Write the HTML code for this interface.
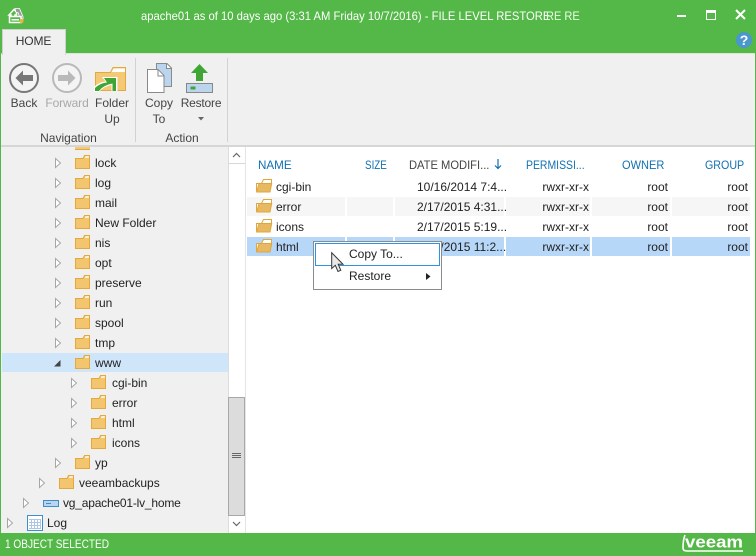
<!DOCTYPE html>
<html><head><meta charset="utf-8"><style>
html,body{margin:0;padding:0}
body{width:756px;height:556px;position:relative;overflow:hidden;background:#54b848;font-family:"Liberation Sans",sans-serif;font-size:12px;color:#222}
div,span{position:absolute;white-space:nowrap}
svg{position:absolute;overflow:visible}
.t{line-height:16px;height:16px}
.rb{color:#444;text-align:center;line-height:16px}
.h{color:#1070b0;top:157px;line-height:16px;transform-origin:0 0}
.c{text-align:right;line-height:16px;width:100px}
.sep{background:#d2d2d2;width:1px}
.cell{height:19px}
</style></head><body>
<svg width="0" height="0" style="position:absolute"><defs>
<g id="f"><path d="M.5 3.500H8L9.500.5H14.500V13.500H.5z" fill="#f2c56e" stroke="#e3a93c"/><path d="M9.800 2.800L10.600 1.300H13.800V2.800z" fill="#fff"/></g>
<g id="a"><path d="M.5.5L5.500 5 .5 9.500z" fill="#fff" stroke="#a6a6a6"/></g>
<g id="o"><path d="M.5 12.500V4.500H5.500L7.500.5H15.500V5" fill="#fff" stroke="#e0a63a"/><path d="M.7 13L3 4.500H15.700L14 13z" fill="#e8b963" stroke="#e0a63a"/></g>
</defs></svg>

<!-- title bar -->
<svg style="left:8px;top:7px" width="18" height="18"><path d="M1 8L6 2.500 8.500 5V8H7V11H3V8z" fill="none" stroke="#fff" stroke-width="1.500"/><path d="M7 1.500H11.500L15 9.500V12H12.500L10 5.500H8z" fill="#9a9a9a" stroke="#fff" stroke-width=".8"/><rect x="1.500" y="9.500" width="11.500" height="6" fill="#54b848" stroke="#fff" stroke-width="1.500"/><rect x="3.500" y="12" width="7.500" height="1.500" fill="#fff"/><circle cx="13.500" cy="14" r="2" fill="#f0b040"/></svg>
<div style="left:141px;top:8px;color:#fff;line-height:16px;transform:scaleX(.937);transform-origin:0 0">apache01 as of 10 days ago (3:31 AM Friday 10/7/2016) - FILE LEVEL RESTORE</div>
<div style="left:546px;top:8px;color:#e8ffe0;line-height:16px;transform:scaleX(.92);transform-origin:0 0">RE RE</div>
<div style="left:677px;top:15px;width:9px;height:2px;background:#fff"></div>
<div style="left:706px;top:10px;width:8px;height:6px;border:1.500px solid #fff;border-top-width:3px"></div>
<svg style="left:735px;top:9px" width="12" height="12"><path d="M1 1L10 10M10 1L1 10" stroke="#fff" stroke-width="2"/></svg>
<div style="left:736px;top:32px;width:16px;height:16px;border-radius:50%;background:#4a97cf;color:#fff;font-weight:bold;font-size:14px;text-align:center;line-height:16px">?</div>

<!-- ribbon -->
<div style="left:1px;top:53px;width:754px;height:93px;background:#f0f0f0"></div>
<div style="left:2px;top:29px;width:62px;height:25px;background:#f0f0f0;border:1px solid #d0d0d0;border-bottom:0"></div>
<div style="left:2px;top:33px;width:63px;text-align:center;color:#333;line-height:16px;letter-spacing:-.1px">HOME</div>
<div style="left:0;top:53px;width:2px;height:1px;background:#d0d0d0"></div>
<div style="left:65px;top:53px;width:691px;height:1px;background:#d8e8d4"></div>

<svg style="left:9px;top:63px" width="30" height="30"><circle cx="15" cy="15" r="14" fill="#f4f4f4" stroke="#777" stroke-width="2"/><path d="M6.500 15L14 7.500V12H24V18H14V22.500z" fill="#777"/></svg>
<svg style="left:52px;top:63px" width="30" height="30"><circle cx="15" cy="15" r="14" fill="#f4f4f4" stroke="#b9b9b9" stroke-width="2"/><path d="M23.500 15L16 7.500V12H6V18H16V22.500z" fill="#b9b9b9"/></svg>
<svg style="left:95px;top:67px" width="32" height="25"><path d="M.5 5.500H15.500L18 .5H30.500V23.500H.5z" fill="#f3c976" stroke="#e3a93c"/><path d="M16.500 5L18.500 1.500H30V5z" fill="#fff"/><path d="M-1 20C2 17 6 15 10.500 14.500L7 10H22.500V24H16.500V18C12 19 7 21 4 25H-1z" fill="#fff"/><path d="M0 21C3 18 7 16 12 15.500L9 11H21V24H17.500V16.500C12 17.500 7 20 4 24H0z" fill="#3fa535"/></svg>
<div class="rb" style="left:4px;width:40px;top:95px">Back</div>
<div class="rb" style="left:42px;width:50px;top:95px;color:#a8a8a8;letter-spacing:-.1px">Forward</div>
<div class="rb" style="left:92px;width:40px;top:95px">Folder</div>
<div class="rb" style="left:92px;width:40px;top:111px">Up</div>
<div class="sep" style="left:135px;top:58px;height:84px"></div>
<svg style="left:146px;top:62px" width="28" height="32"><path d="M10.500 1.500H21L25.500 6V24.500H10.500z" fill="#bcd5ee" stroke="#8a8a8a"/><path d="M20.500 2V6.500H25" fill="#fff" stroke="#8a8a8a"/><path d="M1.500 7.500H12L18 13.500V30.500H1.500z" fill="#fff" stroke="#8a8a8a"/><path d="M12 8V14H17.500" fill="#fff" stroke="#8a8a8a"/></svg>
<svg style="left:186px;top:64px" width="28" height="30"><path d="M13.500 0L22 9H17V17H10V9H5z" fill="#3fa535"/><rect x=".5" y="19.500" width="26" height="9" fill="#bcd5ee" stroke="#888"/><rect x="4.500" y="22.500" width="5" height="3" fill="#3fa535"/></svg>
<div class="rb" style="left:139px;width:40px;top:95px">Copy</div>
<div class="rb" style="left:139px;width:40px;top:111px">To</div>
<div class="rb" style="left:178px;width:46px;top:95px;letter-spacing:-.2px">Restore</div>
<svg style="left:198px;top:117px" width="6" height="4"><path d="M0 0H6L3 3.500z" fill="#666"/></svg>
<div class="rb" style="left:2px;width:133px;top:130px">Navigation</div>
<div class="rb" style="left:136px;width:92px;top:130px">Action</div>
<div class="sep" style="left:227px;top:58px;height:84px"></div>
<div style="left:1px;top:145px;width:754px;height:2px;background:#d6d6d6"></div>

<!-- tree -->
<div style="left:1px;top:147px;width:227px;height:386px;background:#f0f0f0"></div>
<div style="left:2px;top:353px;width:226px;height:19px;background:#cfe5fa"></div>
<div style="left:75px;top:147px;width:15px;height:2px;background:#f3c976;border-bottom:1px solid #e3a93c"></div>

<svg style="left:55px;top:158px" width="6" height="10"><use href="#a"/></svg><svg style="left:75px;top:155px" width="15" height="15"><use href="#f"/></svg><div class="t" style="left:95px;top:155px">lock</div>
<svg style="left:55px;top:178px" width="6" height="10"><use href="#a"/></svg><svg style="left:75px;top:175px" width="15" height="15"><use href="#f"/></svg><div class="t" style="left:95px;top:175px">log</div>
<svg style="left:55px;top:198px" width="6" height="10"><use href="#a"/></svg><svg style="left:75px;top:195px" width="15" height="15"><use href="#f"/></svg><div class="t" style="left:95px;top:195px">mail</div>
<svg style="left:55px;top:218px" width="6" height="10"><use href="#a"/></svg><svg style="left:75px;top:215px" width="15" height="15"><use href="#f"/></svg><div class="t" style="left:95px;top:215px">New Folder</div>
<svg style="left:55px;top:238px" width="6" height="10"><use href="#a"/></svg><svg style="left:75px;top:235px" width="15" height="15"><use href="#f"/></svg><div class="t" style="left:95px;top:235px">nis</div>
<svg style="left:55px;top:258px" width="6" height="10"><use href="#a"/></svg><svg style="left:75px;top:255px" width="15" height="15"><use href="#f"/></svg><div class="t" style="left:95px;top:255px">opt</div>
<svg style="left:55px;top:278px" width="6" height="10"><use href="#a"/></svg><svg style="left:75px;top:275px" width="15" height="15"><use href="#f"/></svg><div class="t" style="left:95px;top:275px">preserve</div>
<svg style="left:55px;top:298px" width="6" height="10"><use href="#a"/></svg><svg style="left:75px;top:295px" width="15" height="15"><use href="#f"/></svg><div class="t" style="left:95px;top:295px">run</div>
<svg style="left:55px;top:318px" width="6" height="10"><use href="#a"/></svg><svg style="left:75px;top:315px" width="15" height="15"><use href="#f"/></svg><div class="t" style="left:95px;top:315px">spool</div>
<svg style="left:55px;top:338px" width="6" height="10"><use href="#a"/></svg><svg style="left:75px;top:335px" width="15" height="15"><use href="#f"/></svg><div class="t" style="left:95px;top:335px">tmp</div>
<svg style="left:54px;top:360px" width="7" height="7"><path d="M6.500 0V6.500H0z" fill="#444"/></svg><svg style="left:75px;top:355px" width="15" height="15"><use href="#f"/></svg><div class="t" style="left:95px;top:355px">www</div>
<svg style="left:71px;top:378px" width="6" height="10"><use href="#a"/></svg><svg style="left:91px;top:375px" width="15" height="15"><use href="#f"/></svg><div class="t" style="left:112px;top:375px">cgi-bin</div>
<svg style="left:71px;top:398px" width="6" height="10"><use href="#a"/></svg><svg style="left:91px;top:395px" width="15" height="15"><use href="#f"/></svg><div class="t" style="left:112px;top:395px">error</div>
<svg style="left:71px;top:418px" width="6" height="10"><use href="#a"/></svg><svg style="left:91px;top:415px" width="15" height="15"><use href="#f"/></svg><div class="t" style="left:112px;top:415px">html</div>
<svg style="left:71px;top:438px" width="6" height="10"><use href="#a"/></svg><svg style="left:91px;top:435px" width="15" height="15"><use href="#f"/></svg><div class="t" style="left:112px;top:435px">icons</div>
<svg style="left:55px;top:458px" width="6" height="10"><use href="#a"/></svg><svg style="left:75px;top:455px" width="15" height="15"><use href="#f"/></svg><div class="t" style="left:95px;top:455px">yp</div>
<svg style="left:39px;top:478px" width="6" height="10"><use href="#a"/></svg><svg style="left:59px;top:475px" width="15" height="15"><use href="#f"/></svg><div class="t" style="left:79px;top:475px">veeambackups</div>
<svg style="left:23px;top:498px" width="6" height="10"><use href="#a"/></svg>
<svg style="left:43px;top:500px" width="16" height="7"><rect x=".5" y=".5" width="15" height="6" fill="#bcd5ee" stroke="#3d8ec9"/><rect x="3" y="3" width="5" height="1" fill="#3d8ec9"/></svg>
<div class="t" style="left:63px;top:495px;letter-spacing:-.2px">vg_apache01-lv_home</div>
<svg style="left:7px;top:518px" width="6" height="10"><use href="#a"/></svg>
<svg style="left:27px;top:515px" width="16" height="16"><rect x=".5" y=".5" width="15" height="15" fill="#fff" stroke="#3d8ec9"/><path d="M2 4.500H14M2 7.500H14M2 10.500H14M2 13.500H14M4.500 4V14M7.500 4V14M10.500 4V14M13.500 4V14" stroke="#a9c8e6" stroke-width="1"/></svg>
<div class="t" style="left:47px;top:515px">Log</div>

<!-- scrollbar -->
<div style="left:228px;top:147px;width:17px;height:386px;background:#fff"></div>
<div style="left:228px;top:147px;width:1px;height:386px;background:#dcdcdc"></div>
<div style="left:245px;top:147px;width:1px;height:386px;background:#e4e4e4"></div>
<svg style="left:232px;top:152px" width="9" height="6"><path d="M1 5L4.500 1.500 8 5" fill="none" stroke="#666" stroke-width="1.200"/></svg>
<div style="left:228px;top:163px;width:17px;height:1px;background:#d8d8d8"></div>
<div style="left:228px;top:397px;width:15px;height:117px;background:#dcdcdc;border:1px solid #a8a8a8"></div>
<div style="left:232px;top:453px;width:9px;height:1px;background:#666"></div>
<div style="left:232px;top:455px;width:9px;height:1px;background:#666"></div>
<div style="left:232px;top:457px;width:9px;height:1px;background:#666"></div>
<svg style="left:232px;top:521px" width="9" height="6"><path d="M1 1L4.500 4.500 8 1" fill="none" stroke="#666" stroke-width="1.200"/></svg>

<!-- list -->
<div style="left:246px;top:147px;width:509px;height:386px;background:#fff"></div>
<div class="h" style="left:258px;transform:scaleX(.97)">NAME</div>
<div class="h" style="left:365px;transform:scaleX(.82)">SIZE</div>
<div class="h" style="left:409px;color:#444;transform:scaleX(.93)">DATE MODIFI...</div>
<svg style="left:494px;top:159px" width="8" height="11"><path d="M4 0V9M1 6.500L4 9.500 7 6.500" fill="none" stroke="#1070b0" stroke-width="1.200"/></svg>
<div class="h" style="left:526px;transform:scaleX(.87)">PERMISSI...</div>
<div class="h" style="left:622px;transform:scaleX(.92)">OWNER</div>
<div class="h" style="left:705px;transform:scaleX(.89)">GROUP</div>

<div class="cell" style="left:247px;top:197px;width:98px;background:#f6f6f6"></div>
<div class="cell" style="left:347px;top:197px;width:46px;background:#f6f6f6"></div>
<div class="cell" style="left:395px;top:197px;width:109px;background:#f6f6f6"></div>
<div class="cell" style="left:506px;top:197px;width:84px;background:#f6f6f6"></div>
<div class="cell" style="left:592px;top:197px;width:78px;background:#f6f6f6"></div>
<div class="cell" style="left:672px;top:197px;width:78px;background:#f6f6f6"></div>
<div class="cell" style="left:247px;top:237px;width:98px;background:#b7d7f8"></div>
<div class="cell" style="left:347px;top:237px;width:46px;background:#b7d7f8"></div>
<div class="cell" style="left:395px;top:237px;width:109px;background:#b7d7f8"></div>
<div class="cell" style="left:506px;top:237px;width:84px;background:#b7d7f8"></div>
<div class="cell" style="left:592px;top:237px;width:78px;background:#b7d7f8"></div>
<div class="cell" style="left:672px;top:237px;width:78px;background:#b7d7f8"></div>

<svg style="left:256px;top:179px" width="17" height="15"><use href="#o"/></svg><div class="t" style="left:276px;top:179px">cgi-bin</div>
<div class="t" style="left:417px;top:179px">10/16/2014 7:4...</div><div class="c t" style="left:489px;top:179px">rwxr-xr-x</div><div class="c t" style="left:568px;top:179px">root</div><div class="c t" style="left:648px;top:179px">root</div>
<svg style="left:256px;top:199px" width="17" height="15"><use href="#o"/></svg><div class="t" style="left:276px;top:199px">error</div>
<div class="t" style="left:417px;top:199px">2/17/2015 4:31...</div><div class="c t" style="left:489px;top:199px">rwxr-xr-x</div><div class="c t" style="left:568px;top:199px">root</div><div class="c t" style="left:648px;top:199px">root</div>
<svg style="left:256px;top:219px" width="17" height="15"><use href="#o"/></svg><div class="t" style="left:276px;top:219px">icons</div>
<div class="t" style="left:417px;top:219px">2/17/2015 5:19...</div><div class="c t" style="left:489px;top:219px">rwxr-xr-x</div><div class="c t" style="left:568px;top:219px">root</div><div class="c t" style="left:648px;top:219px">root</div>
<svg style="left:256px;top:239px" width="17" height="15"><use href="#o"/></svg><div class="t" style="left:276px;top:239px">html</div>
<div class="t" style="left:417px;top:239px">2/17/2015 11:2...</div><div class="c t" style="left:489px;top:239px">rwxr-xr-x</div><div class="c t" style="left:568px;top:239px">root</div><div class="c t" style="left:648px;top:239px">root</div>

<!-- context menu -->
<div style="left:313px;top:241px;width:127px;height:47px;background:#fff;border:1px solid #8c8c8c"></div>
<div style="left:315px;top:243px;width:123px;height:21px;border:1px solid #2f93e0"></div>
<div class="t" style="left:349px;top:246px">Copy To...</div>
<div class="t" style="left:349px;top:268px">Restore</div>
<svg style="left:426px;top:273px" width="5" height="7"><path d="M0 0L4.500 3.500 0 7z" fill="#222"/></svg>
<svg style="left:331px;top:252px" width="13" height="22"><path d="M.7.7V16.500L4.300 13.300 7 19.500 9.800 18.300 7.200 12.300H12z" fill="#e8e8e8" stroke="#333" stroke-width="1"/></svg>

<!-- frame -->
<div style="left:0;top:53px;width:1px;height:480px;background:#54b848"></div>
<div style="left:755px;top:53px;width:1px;height:480px;background:#54b848"></div>

<!-- status -->
<div style="left:0;top:533px;width:756px;height:23px;background:#54b848"></div>
<div style="left:5px;top:536px;color:#fff;line-height:16px;transform:scaleX(.84);transform-origin:0 0">1 OBJECT SELECTED</div>
<svg style="left:680px;top:534px" width="66" height="20"><path d="M5 1C3 6 3 11 3 14C3 16 4.500 17 7 17H63" fill="none" stroke="#fff" stroke-width="1.600"/><text x="5" y="13.500" font-family="Liberation Sans" font-size="17" font-weight="bold" fill="#fff" textLength="58" lengthAdjust="spacingAndGlyphs">veeam</text></svg>
</body></html>
